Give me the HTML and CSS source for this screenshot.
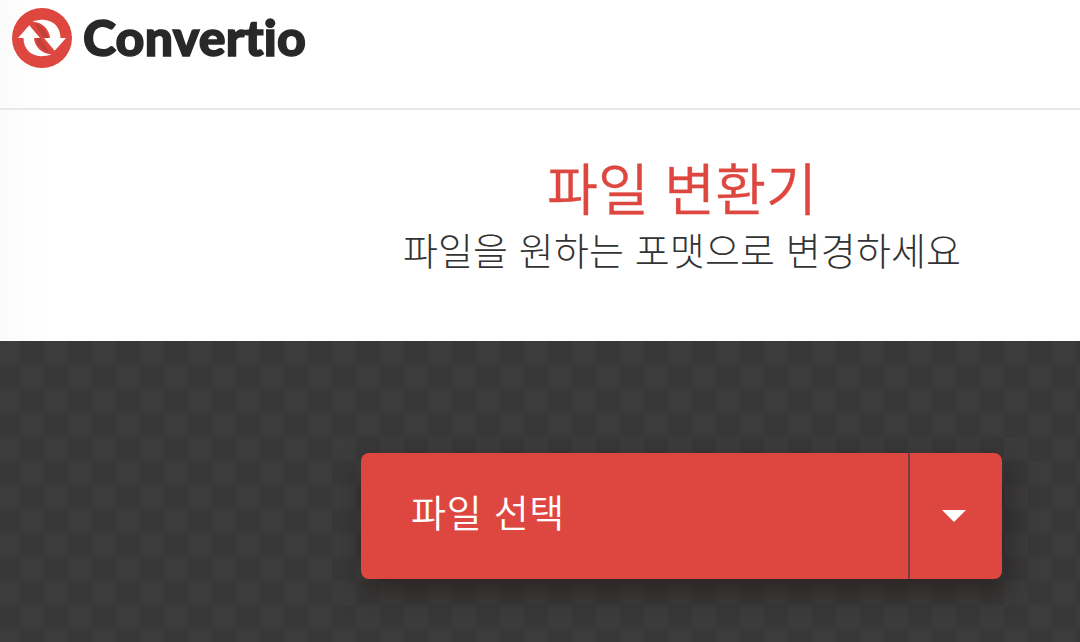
FILE: index.html
```html
<!DOCTYPE html>
<html lang="ko">
<head>
<meta charset="utf-8">
<title>Convertio</title>
<link rel="stylesheet" href="styles.css">
</head>
<body>
<header class="header">
  <a class="logo">
    <svg class="logo-mark" viewBox="0 0 60 60" aria-hidden="true">
      <circle cx="30" cy="30" r="30" fill="#de4740"/>
      <path d="M23 15.500C29 16 34 21 36.500 30H32L26 22ZM37 44.500C31 44 26 39 23.500 30H28L34 38Z" fill="#c5403b"/>
      <path d="M20.500 13.700C24 12.300 28 11.800 31 11.800C41 12 48.500 19 48.500 30H54L42.700 42.700L32 30H38C37.500 22 31 14 20.500 13.700Z" fill="#fff"/>
      <path d="M39.500 46.300C36 47.700 32 48.200 29 48.200C19 48 11.500 41 11.500 30H6L17.300 17.300L28 30H22C22.500 38 29 46 39.500 46.300Z" fill="#fff"/>
    </svg>
    <span class="logo-name">Convertio</span>
  </a>
</header>
<section class="intro">
  <h1 class="title">파일 변환기</h1>
  <p class="subtitle">파일을 원하는 포맷으로 변경하세요</p>
</section>
<main class="upload">
  <div class="picker">
    <button class="choose">파일 선택</button>
    <button class="more" aria-label="더 보기"><span class="caret"></span></button>
  </div>
</main>
</body>
</html>
```
FILE: styles.css
```css
* { box-sizing: border-box; }
body {
  margin: 0;
  width: 1080px;
  height: 642px;
  overflow: hidden;
  display: flex;
  flex-direction: column;
  background: linear-gradient(90deg, #fbfbfb, #fff 45px);
  font-family: "Noto Sans CJK KR", sans-serif;
}
.header { height: 110px; border-bottom: 2px solid #e8e8e8; padding: 8px 12px; }
.logo { display: flex; gap: 11px; }
.logo-mark { width: 60px; height: 60px; }
.logo-name {
  font: 900 50px/58px Lato, sans-serif;
  color: #282828;
  letter-spacing: 0.2px;
  -webkit-text-stroke: 1.5px #282828;
}
.intro {
  height: 231px;
  padding: 41px 0 0 284px;
  text-align: center;
  white-space: nowrap;
}
.title {
  margin: 0;
  font-size: 55.3px;
  line-height: 71px;
  font-weight: 350;
  color: #de4740;
  -webkit-text-stroke: 0.4px #de4740;
}
.subtitle { margin: 2px 0 0; font-size: 38px; line-height: 50px; font-weight: 300; color: #333; letter-spacing: 0.1px; }
.upload {
  flex: 1;
  padding: 112px 0 0 361px;
  background: conic-gradient(#383838 25%, #3c3c3c 0 50%, #383838 0 75%, #3c3c3c 0) -4px 0 / 48px 48px;
}
.picker {
  display: flex;
  width: 641px;
  height: 126px;
  border-radius: 8px;
  background: #de4740;
  box-shadow: 4px 12px 28px rgba(35, 25, 22, .65);
}
.choose, .more { border: 0; background: none; color: #fff; }
.choose {
  width: 547px;
  padding: 0 0 12px 50px;
  text-align: left;
  font: 350 38px "Noto Sans CJK KR", sans-serif;
  letter-spacing: 0.7px;
}
.more {
  flex: 1;
  border-left: 2px solid #783e3b;
  display: flex;
  align-items: center;
  justify-content: center;
  padding: 0 4px 0 0;
}
.caret { width: 24px; height: 12px; background: #fff; clip-path: polygon(0 0, 100% 0, 50% 100%); }
```
